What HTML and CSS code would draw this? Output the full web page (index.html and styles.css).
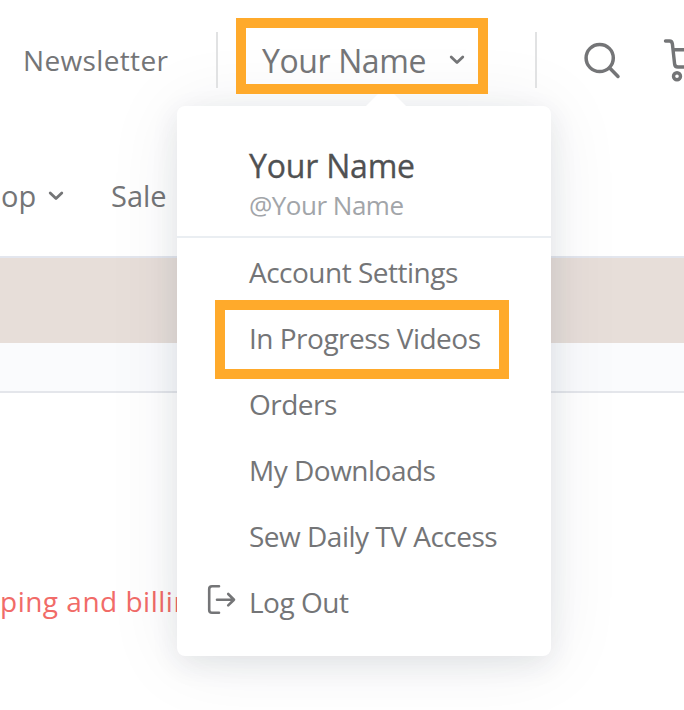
FILE: index.html
```
<!DOCTYPE html>
<html lang="en">
<head>
<meta charset="utf-8">
<title>Account menu</title>
<link rel="stylesheet" href="styles.css">
</head>
<body>
<header class="topbar">
  <a class="newsletter">Newsletter</a>
  <div class="account">
    <span class="account-name">Your Name</span>
    <svg class="chevron" width="16" height="10" viewBox="0 0 16 10"><path d="M2.200 2 8 7.600 13.800 2"/></svg>
    <span class="highlight highlight-trigger"></span>
  </div>
  <div class="actions">
    <svg class="search" width="38" height="38" viewBox="0 0 38 38"><circle cx="16.700" cy="17" r="13.600"/><path d="M26.700 27 35 35.500"/></svg>
    <svg class="cart" width="44" height="44" viewBox="0 0 44 44"><path d="M2.500 2h4q2.500 0 2.900 3l2.200 20q.3 3 3.300 3h25M10.500 10.700h30l-3 13"/><circle cx="14" cy="37.200" r="3.500"/><circle cx="34" cy="37.200" r="3.500"/></svg>
  </div>
</header>
<nav class="nav">
  <a class="shop">op</a>
  <svg class="chevron" width="16" height="10" viewBox="0 0 16 10"><path d="M2.200 2 8 7.600 13.800 2"/></svg>
  <a class="sale">Sale</a>
</nav>
<div class="promo"></div>
<div class="substrip"></div>
<main class="content"><p class="notice">ping and billing</p></main>

<aside class="menu">
  <div class="profile">
    <div class="profile-name">Your Name</div>
    <div class="profile-handle">@Your Name</div>
  </div>
  <ul class="links">
    <li class="settings">Account Settings</li>
    <li class="videos">In Progress Videos<span class="highlight highlight-videos"></span></li>
    <li class="orders">Orders</li>
    <li class="downloads">My Downloads</li>
    <li class="access">Sew Daily TV Access</li>
    <li class="logout"><svg width="30" height="32" viewBox="0 0 30 32"><path d="M12 2.200H5Q2.200 2.200 2.200 5v21q0 2.800 2.800 2.800h7M10 15.700h17M21.200 10l5.800 5.700-5.800 5.700"/></svg>Log Out</li>
  </ul>
</aside>
</body>
</html>
```
FILE: styles.css
```
* { box-sizing: border-box; }
body {
  margin: 0;
  width: 684px;
  height: 710px;
  overflow: hidden;
  position: relative;
  background: #fff;
  color: #747577;
  font: 28px/40px "Open Sans", sans-serif;
}
svg {
  display: block;
  flex: none;
  fill: none;
  stroke: #747577;
  stroke-linecap: round;
  stroke-linejoin: round;
}
.topbar { display: flex; align-items: center; height: 120px; }
.topbar > * { flex: none; }
.newsletter { width: 216px; padding-left: 23px; letter-spacing: .35px; }
.account {
  position: relative;
  z-index: 3;
  display: flex;
  align-items: center;
  width: 321px;
  height: 56px;
  padding-left: 44px;
  border: solid #e1e2e3;
  border-width: 0 2px;
  font-size: 32px;
  letter-spacing: -.4px;
}
.account-name { width: 187px; padding-top: 1px; white-space: nowrap; }
.chevron { stroke-width: 2.8; }
.actions { display: flex; align-items: center; padding-left: 46px; }
.search { stroke-width: 3.5; }
.cart { stroke-width: 3.4; margin: 2px 0 0 42px; }
.nav {
  display: flex;
  align-items: center;
  height: 138px;
  padding-top: 16px;
  border-bottom: 2px solid #e3e6ee;
  font-size: 29px;
}
.shop { width: 48px; padding-left: 1px; }
.sale { margin-left: 47px; }
.promo { height: 85px; background: #e7ded9; }
.substrip { height: 50px; background: #fafbfd; border-bottom: 2px solid #e4e6eb; }
.content { padding-top: 188px; }
.notice { margin: 0; color: #f16b68; white-space: nowrap; letter-spacing: .5px; }

.menu {
  position: absolute;
  z-index: 2;
  left: 177px;
  top: 106px;
  width: 374px;
  height: 550px;
  border-radius: 8px;
  background: #fff;
  box-shadow: 0 4px 76px rgba(30, 40, 60, .08), 0 8px 28px rgba(30, 40, 60, .09);
}
.menu::before {
  content: "";
  position: absolute;
  left: 189px;
  top: -20px;
  border: 20px solid transparent;
  border-top-width: 0;
  border-bottom-color: #fff;
}
.profile { height: 132px; padding: 40px 0 0 72px; border-bottom: 2px solid #eaeef2; }
.profile-name { height: 39px; color: #505152; font-size: 32px; letter-spacing: -.2px; -webkit-text-stroke: .3px #505152; }
.profile-handle { color: #a2a5a9; font-size: 26px; letter-spacing: -.5px; }
.links { margin: 1px 0 0; padding: 0; list-style: none; letter-spacing: -.5px; }
.links li {
  position: relative;
  display: flex;
  align-items: center;
  height: 66px;
  padding-left: 72px;
  white-space: nowrap;
}
.links .logout { padding-left: 30px; }
.logout svg { margin-right: 12px; margin-top: -4px; stroke-width: 2.6; }

.highlight { position: absolute; border: 10px solid #ffaa2b; }
.highlight-trigger { left: 18px; top: -14px; width: 252px; height: 76px; }
.highlight-videos { left: 38px; top: -5px; width: 294px; height: 79px; }
```
